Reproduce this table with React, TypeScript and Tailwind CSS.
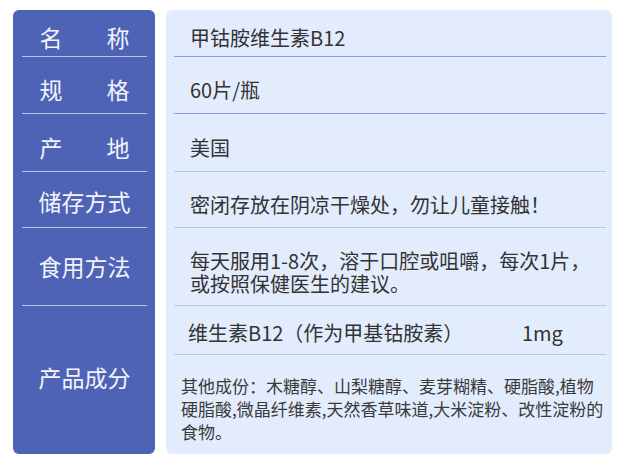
import React from 'react';

// Product info card: label column (blue) + value column (light blue)

const FONT = { fontFamily: '"Noto Sans CJK SC", "Noto Sans", sans-serif' };

interface Row {
  label: string;
  spread?: boolean;
  height: string;
  pad: string;
}

const ROWS: Row[] = [
  { label: '名称', spread: true, height: 'h-[47px]', pad: 'pt-[9px]' },
  { label: '规格', spread: true, height: 'h-[57px]', pad: 'pt-[9px]' },
  { label: '产地', spread: true, height: 'h-[58px]', pad: 'pt-[9px]' },
  { label: '储存方式', height: 'h-[56px]', pad: 'pt-[4px]' },
  { label: '食用方法', height: 'h-[78px]', pad: 'pt-[0px]' },
  { label: '产品成分', height: 'h-[148px]', pad: 'pb-[6px]' },
];

function Label({ row, last }: { row: Row; last: boolean }) {
  return (
    <div className={`${row.height} mx-[9px] mr-[8px] flex items-center justify-center ${last ? '' : 'border-b border-[#b9c3ea]'}`}>
      {row.spread ? (
        <div className={`w-[90px] flex justify-between ${row.pad}`}>
          <span>{row.label[0]}</span>
          <span>{row.label[1]}</span>
        </div>
      ) : (
        <div className={row.pad}>{row.label}</div>
      )}
    </div>
  );
}

export default function App() {
  return (
    <div className="w-[619px] h-[462px] bg-white flex gap-[11px] pl-[13px] pt-[10px]" style={FONT}>
      {/* Label column */}
      <div className="w-[142px] h-[444px] bg-[#4e63b6] rounded-[6px] flex flex-col text-[23px] text-[#f2f4fc] leading-none">
        {ROWS.map((r, i) => (
          <Label key={r.label} row={r} last={i === ROWS.length - 1} />
        ))}
      </div>

      {/* Value column */}
      <div className="w-[446px] h-[444px] bg-[#e2ecfc] rounded-[6px] flex flex-col text-[20px] text-[#333333] leading-none">
        <div className="h-[47px] ml-[8px] mr-[6px] border-b border-[#8e9edb] flex items-center pt-[10px] pl-[16px]">
          甲钴胺维生素B12
        </div>
        <div className="h-[57px] ml-[8px] mr-[6px] border-b border-[#8e9edb] flex items-center pt-[10px] pl-[16px]">
          60片/瓶
        </div>
        <div className="h-[58px] ml-[8px] mr-[6px] border-b border-[#b4c2ee] flex items-center pt-[10px] pl-[16px]">
          美国
        </div>
        <div className="h-[56px] ml-[8px] mr-[6px] border-b border-[#b4c2ee] flex items-center pt-[10px] pl-[16px]">
          密闭存放在阴凉干燥处，勿让儿童接触！
        </div>
        <div className="h-[78px] ml-[8px] mr-[6px] border-b border-[#b4c2ee] flex flex-col justify-center pt-[10px] pl-[16px] leading-[23px]">
          <div className="whitespace-nowrap">每天服用1-8次，溶于口腔或咀嚼，每次1片，</div>
          <div>或按照保健医生的建议。</div>
        </div>
        <div className="h-[49px] ml-[8px] mr-[6px] border-b border-[#b4c2ee] flex items-center pt-[6px] pl-[14px]">
          <span className="w-[334px]">维生素B12（作为甲基钴胺素）</span>
          <span>1mg</span>
        </div>
        <div className="h-[99px] flex flex-col justify-center pl-[15px] pt-[8px] text-[17px] leading-[23px] text-[#3a3a3a]">
          <div className="whitespace-nowrap">其他成份：木糖醇、山梨糖醇、麦芽糊精、硬脂酸,植物</div>
          <div className="whitespace-nowrap">硬脂酸,微晶纤维素,天然香草味道,大米淀粉、改性淀粉的</div>
          <div>食物。</div>
        </div>
      </div>
    </div>
  );
}
